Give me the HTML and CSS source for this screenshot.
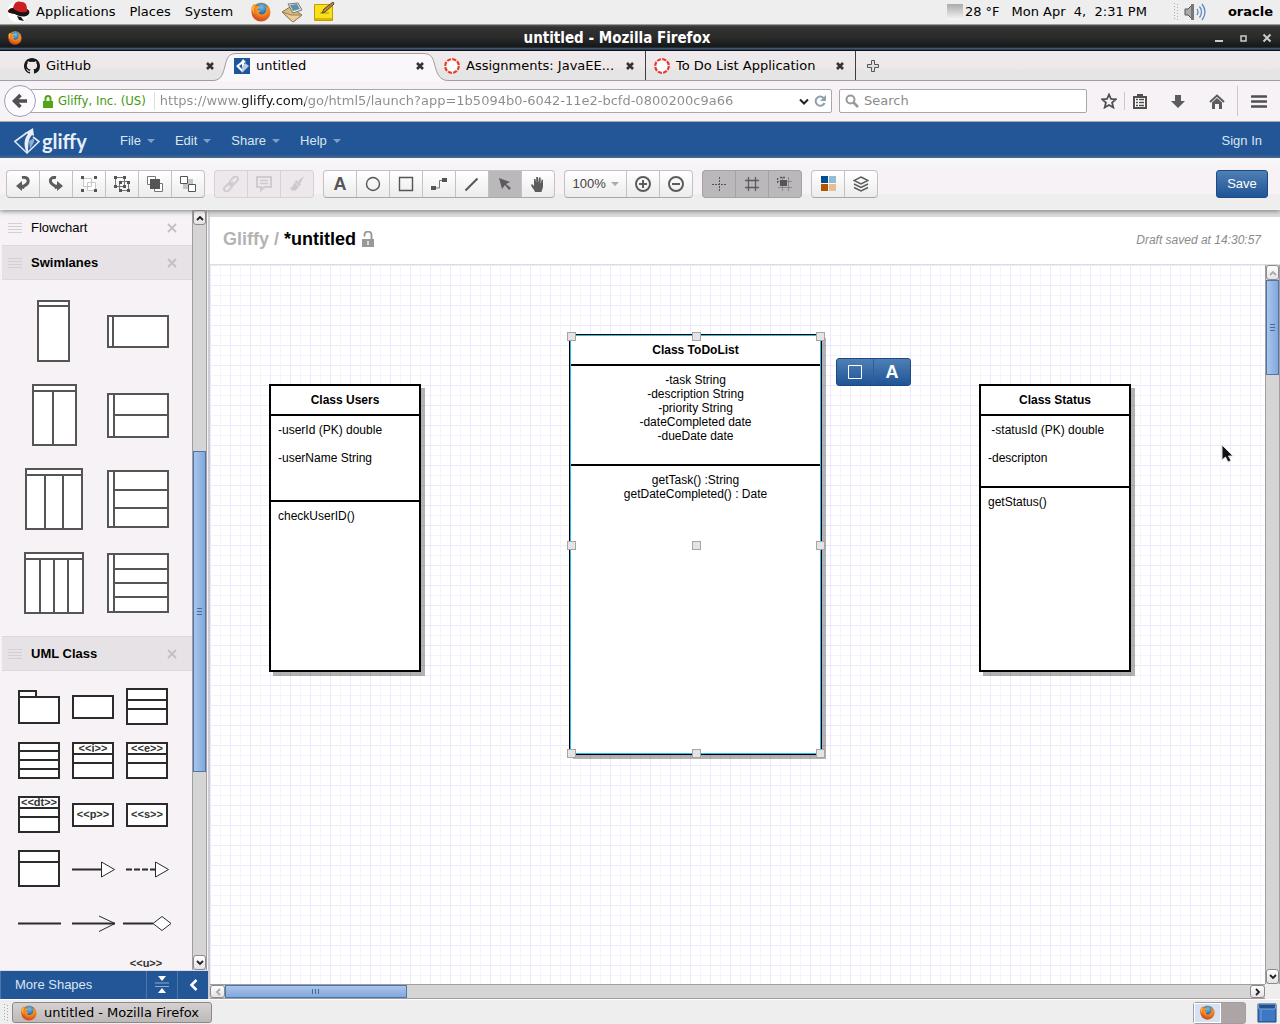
FILE: index.html
```html
<!DOCTYPE html>
<html lang="en">
<head>
<meta charset="utf-8">
<title>untitled - Mozilla Firefox</title>
<link rel="stylesheet" href="styles.css">
</head>
<body>
<svg class="defs" aria-hidden="true">
  <defs>
    <radialGradient id="fox-body" cx=".6" cy=".3" r=".8"><stop offset="0" stop-color="#ffd23c"/><stop offset=".45" stop-color="#f58a1f"/><stop offset="1" stop-color="#c8361a"/></radialGradient>
    <radialGradient id="fox-globe" cx=".5" cy=".3" r=".7"><stop offset="0" stop-color="#6fc0f0"/><stop offset="1" stop-color="#12407f"/></radialGradient>
    <symbol id="firefox" viewBox="0 0 20 20">
      <circle cx="10" cy="10" r="9.5" fill="url(#fox-body)"/>
      <circle cx="10.5" cy="8" r="7" fill="url(#fox-globe)"/>
      <path d="M.8 5 3 2l1.500 2.200c2-.6 3.500 0 4.500 1.300L6.600 7c-.4 1 .2 1.800 2 1.600 1 .1.600 1.300-.8 1.700-.3 1.800 2.500 2.700 4.200 2 2.200-.8 3.600-2.800 3.400-5.300-.1-1.500-.8-2.600-1.600-3.400 2 .6 3.600 2.400 4.200 4.400.8 5-3 10.500-8.200 10.500C3.800 18.500-.6 12 .8 5z" fill="url(#fox-body)"/>
      <path d="M1 5 3 2.500l1 2.300C2.500 7 2.500 10 4 12c-2-1-3.500-4-3-7z" fill="#f9b233"/>
    </symbol>
    <symbol id="close" viewBox="0 0 10 10"><path d="M2 2l6 6M8 2L2 8" stroke="#333" stroke-width="2.600"/></symbol>
    <symbol id="dismiss" viewBox="0 0 10 10"><path d="M1 1l8 8M9 1L1 9" stroke="#c3bfc3" stroke-width="1.800"/></symbol>
    <symbol id="canvas-ring" viewBox="0 0 16 16"><circle cx="8" cy="8" r="6.800" fill="#fff" stroke="#e8392c" stroke-width="2.200" stroke-dasharray="4.140 1.200"/></symbol>
    <symbol id="grip" viewBox="0 0 14 12"><path d="M0 1.500h14M0 4.500h14M0 7.500h14M0 10.500h14" stroke="#d3cfd3"/></symbol>
    <symbol id="dots" viewBox="0 0 6 18"><path d="M1.500 0v18M4.500 1v17" stroke="#aaa" stroke-dasharray="1 2"/></symbol>
    <symbol id="caret" viewBox="0 0 8 4"><path d="M0 0h8L4 4z" fill="currentColor"/></symbol>
    <symbol id="up" viewBox="0 0 8 6"><path d="M1 5l3-3 3 3" fill="none" stroke="currentColor" stroke-width="1.800"/></symbol>
    <symbol id="down" viewBox="0 0 8 6"><path d="M1 1l3 3 3-3" fill="none" stroke="currentColor" stroke-width="1.800"/></symbol>
    <symbol id="left" viewBox="0 0 6 8"><path d="M5 1L2 4l3 3" fill="none" stroke="currentColor" stroke-width="1.800"/></symbol>
    <symbol id="right" viewBox="0 0 6 8"><path d="M1 1l3 3-3 3" fill="none" stroke="currentColor" stroke-width="1.800"/></symbol>
  </defs>
</svg>

<header class="panel">
  <svg width="24" height="24" viewBox="0 0 24 24"><circle cx="11" cy="12" r="10.500" fill="#fff"/><path d="M1 11c2-3 4-3 5-3 1-3 2-6 4-6 2-1 3 0 5 0 4 0 5 4 5 7 2 1 3 3 1 5-3 3-9 2-13 0-4-1-8-1-7-3z" fill="#cb1f24"/><path d="M6 8c2 3 8 5 13 4 1 0 2-1 1-3 3 2 3 4 1 6-4 3-10 1-13-1-3-1-6-1-7-3 1-2 3-3 5-3zM10 16l4 1 3 4-5-1z" fill="#161616"/></svg>
  <button class="panel-menu">Applications</button>
  <button class="panel-menu">Places</button>
  <button class="panel-menu">System</button>
  <svg width="20" height="20"><use href="#firefox"/></svg>
  <svg width="22" height="22" viewBox="0 0 22 22"><path d="M1 11l8-5 12 8-9 7z" fill="#d9b97c" stroke="#8b7348"/><path d="M7 3l10-1 4 7-9 3z" fill="#e9ecea" stroke="#777"/><path d="M9 4l7-1 3 5-7 2z" fill="#5e8fa6"/><path d="M1 11l9 3 11 0-9 7z" fill="#e8cf9c" stroke="#9a8050"/></svg>
  <svg width="22" height="22" viewBox="0 0 22 22"><path d="M1.500 3.500h18v16h-18z" fill="#f6e11c" stroke="#c49b00"/><path d="M2 17h17v2H2z" fill="#d9b400"/><path d="M7 12h9" stroke="#a99000"/><path d="M9 12l2-4 9-7 1 2-9 8z" fill="#b98a4b" stroke="#5b4520"/></svg>
  <span class="grow"></span>
  <span class="weather"><i class="fog"></i>28 °F</span>
  <span class="clock">Mon Apr&nbsp; 4,&nbsp; 2:31 PM</span>
  <svg class="panel-dots" width="6" height="18"><use href="#dots"/></svg>
  <svg width="24" height="20" viewBox="0 0 24 20"><path d="M2 7h3l5-5v16l-5-5H2z" fill="#aaa" stroke="#555"/><path d="M8 2h3v16H8z" fill="#777"/><path d="M14 7q2 3 0 6M16.500 4.500q4 5.500 0 11M19 2q6 8 0 16" fill="none" stroke="#6089c0" stroke-width="1.300"/></svg>
  <strong class="user">oracle</strong>
</header>

<div class="titlebar">
  <svg width="14" height="14"><use href="#firefox"/></svg>
  <h1>untitled - Mozilla Firefox</h1>
  <div class="window-buttons">
    <button aria-label="Minimize"><svg width="10" height="10"><path d="M1 7h8v2H1z" fill="#ccc"/></svg></button>
    <button aria-label="Maximize"><svg width="10" height="10"><path d="M3 3h5v5H3z" fill="none" stroke="#ccc" stroke-width="1.500"/></svg></button>
    <button aria-label="Close"><svg width="10" height="10"><path d="M1.500 1.500l7 7M8.500 1.500l-7 7" stroke="#ccc" stroke-width="2"/></svg></button>
  </div>
</div>

<nav class="tabs" aria-label="Tabs">
  <div class="tab"><svg width="16" height="16" viewBox="0 0 16 16"><path fill="#1a1a1a" d="M8 0C3.580 0 0 3.580 0 8c0 3.540 2.290 6.530 5.470 7.590.4.070.55-.17.55-.38v-1.490c-2.230.48-2.700-1.070-2.700-1.070-.36-.92-.89-1.170-.89-1.170-.73-.5.060-.49.060-.49.800.060 1.230.82 1.230.82.720 1.210 1.870.87 2.330.66.070-.52.280-.87.510-1.070C4.780 11.200 2.910 10.510 2.910 7.450c0-.87.310-1.590.82-2.150-.08-.2-.36-1.020.08-2.120 0 0 .67-.21 2.200.82a7.600 7.600 0 0 1 4 0c1.530-1.040 2.200-.82 2.200-.82.440 1.100.16 1.920.08 2.120.51.560.82 1.270.82 2.150 0 3.070-1.870 3.750-3.650 3.950.29.250.54.730.54 1.480v2.330c0 .21.150.46.550.38A8 8 0 0 0 16 8c0-4.420-3.580-8-8-8z"/></svg><a href="#github">GitHub</a><button aria-label="Close GitHub"><svg width="10" height="10"><use href="#close"/></svg></button></div>
  <div class="tab active">
    <svg class="tab-shape" width="236" height="29" viewBox="0 0 236 29"><path d="M0 28.500C8 28.500 10 22 12 14 14 5 16 1.500 24 1.500H210C218 1.500 220 5 222 14 224 22 227 28.500 235 28.500V29H0z" fill="#f9f7fa"/><path d="M0 28.500C8 28.500 10 22 12 14 14 5 16 1.500 24 1.500H210C218 1.500 220 5 222 14 224 22 227 28.500 235 28.500" fill="none" stroke="#a39da3"/></svg>
    <svg width="16" height="16" viewBox="0 0 16 16"><path fill="#1d559b" d="M0 0h16v16H0z"/><path d="M8 14L2 8l5-4 2-3 3 3-2 1v3z" fill="#fff"/><path d="M11 5l4 3-7 7V9z" fill="#b9cce4"/><path d="M5 8l3-2v5z" fill="#1d559b"/></svg><a href="#untitled" aria-current="page">untitled</a><button aria-label="Close untitled"><svg width="10" height="10"><use href="#close"/></svg></button></div>
  <div class="tab edged"><svg width="16" height="16"><use href="#canvas-ring"/></svg><a href="#assignments">Assignments: JavaEE...</a><button aria-label="Close Assignments"><svg width="10" height="10"><use href="#close"/></svg></button></div>
  <div class="tab edged"><svg width="16" height="16"><use href="#canvas-ring"/></svg><a href="#todo">To Do List Application</a><button aria-label="Close To Do List Application"><svg width="10" height="10"><use href="#close"/></svg></button></div>
  <button class="new-tab" aria-label="New tab"><svg width="14" height="14"><path d="M5.500 1.500h3v4h4v3h-4v4h-3v-4h-4v-3h4z" fill="#e0dee0" stroke="#555"/></svg></button>
</nav>

<div class="navbar">
  <button class="back" aria-label="Back"><svg width="16" height="16"><path d="M15 8H4M8.500 2L2.500 8l6 6" fill="none" stroke="#505050" stroke-width="3.600"/></svg></button>
  <div class="urlbar">
    <svg width="10" height="13"><path d="M0 6h10v7H0z" fill="#55a51c"/><path d="M2.500 7V3.500a2.500 2.500 0 0 1 5 0V7" fill="none" stroke="#55a51c" stroke-width="2"/></svg>
    <span class="identity">Gliffy, Inc. (US)</span>
    <input class="address" type="text" aria-label="Address" value="https://www.gliffy.com/go/html5/launch?app=1b5094b0-6042-11e2-bcfd-0800200c9a66">
    <button aria-label="History"><svg width="10" height="7"><path d="M1 1.500l4 4 4-4" fill="none" stroke="#222" stroke-width="2"/></svg></button>
    <button aria-label="Reload"><svg width="12" height="12"><path d="M10 3.500A4.600 4.600 0 1 0 10.500 8" fill="none" stroke="#8fa0ae" stroke-width="2"/><path d="M12 0v6H6z" fill="#8fa0ae"/></svg></button>
  </div>
  <label class="search">
    <svg width="14" height="14"><circle cx="5.500" cy="5.500" r="4" fill="none" stroke="#999" stroke-width="2"/><path d="M8.500 8.500l4.500 4.500" stroke="#999" stroke-width="2.600"/></svg>
    <input type="text" placeholder="Search" aria-label="Search">
  </label>
  <div class="nav-icons">
    <button aria-label="Bookmark"><svg width="16" height="16"><path d="M8 1.500l2 4.500 4.800.4-3.700 3.200 1.200 4.900L8 12l-4.300 2.500 1.200-4.900L1.200 6.400 6 6z" fill="none" stroke="#505050" stroke-width="1.800"/></svg></button>
    <span class="rule short"></span>
    <button aria-label="Bookmarks list"><svg width="14" height="16"><path d="M1 4h12v11H1z" fill="#fff" stroke="#505050" stroke-width="2"/><path d="M4 1h6v3H4z" fill="#505050"/><path d="M3 6.500h2M6 6.500h5M3 9.500h2M6 9.500h5M3 12.500h2M6 12.500h5" stroke="#505050" stroke-width="1.500"/></svg></button>
    <button class="spaced" aria-label="Downloads"><svg width="14" height="15"><path d="M4 1h6v6h4l-7 7-7-7h4z" fill="#5c5c5c"/></svg></button>
    <button class="spaced" aria-label="Home"><svg width="16" height="15"><path d="M1 8l7-6.500L15 8" fill="none" stroke="#5c5c5c" stroke-width="2"/><path d="M3 8.500L8 4l5 4.500V15h-3v-5H6v5H3z" fill="#5c5c5c"/></svg></button>
    <span class="rule tall"></span>
    <button aria-label="Menu"><svg width="16" height="13"><path d="M1 1.500h14M1 6.500h14M1 11.500h14" stroke="#505050" stroke-width="2.600" stroke-linecap="round"/></svg></button>
  </div>
</div>

<div class="appbar">
  <a class="brand" href="#home"><svg width="26" height="27"><path d="M12.500 5L.8 13.500 13 25l12-11.500-6-4.500" fill="none" stroke="#dfe9f5" stroke-width="1.600"/><path d="M13.500 26C9 18 10 11 14 6l-3-1 8-5 1 8-2-1c-5 5-3 12-4.500 19z" fill="#e6eef8"/><path d="M15 13l5-3v4l-4 7z" fill="#8eabd0"/></svg><span>gliffy</span></a>
  <nav class="menus">
    <button>File<svg width="8" height="4"><use href="#caret"/></svg></button>
    <button>Edit<svg width="8" height="4"><use href="#caret"/></svg></button>
    <button>Share<svg width="8" height="4"><use href="#caret"/></svg></button>
    <button>Help<svg width="8" height="4"><use href="#caret"/></svg></button>
  </nav>
  <a class="signin" href="#signin">Sign In</a>
</div>

<div class="toolbar" role="toolbar">
  <div class="group">
    <button aria-label="Undo"><svg width="16" height="16"><path d="M7 1.500c7-1 9 5.500 1 9" fill="none" stroke="#5b5d5b" stroke-width="3"/><path d="M1 10l6-5v3.500l3 1.500-1 3-2-.5V15z" fill="#5b5d5b"/></svg></button>
    <button aria-label="Redo"><svg width="16" height="16"><path d="M8 1.500c-7-1-8 5.500 0 9" fill="none" stroke="#5b5d5b" stroke-width="3"/><path d="M15 10L9 5v3.500L6 10l1 3 2-.5V15z" fill="#5b5d5b"/></svg></button>
    <button aria-label="Group"><svg width="18" height="18"><path d="M3.500 3.500h8v8h-8zM7.500 7.500h8v8h-8z" fill="#fff" stroke="#c8c8c8"/><path d="M1 1h3v3H1zM14 1h3v3h-3zM1 14h3v3H1zM14 14h3v3h-3z" fill="#555"/></svg></button>
    <button aria-label="Ungroup"><svg width="18" height="18"><path d="M2.500 2.500h9v9h-9zM6.500 6.500h9v9h-9z" fill="none" stroke="#777"/><path d="M1 1h3v3H1zM10 1h3v3h-3zM1 10h3v3H1zM6 6h3v3H6zM14 6h3v3h-3zM6 14h3v3H6zM14 14h3v3h-3zM10 10h3v3h-3z" fill="#555"/></svg></button>
    <button aria-label="Bring to front"><svg width="18" height="18"><path d="M1.500 1.500h8v8h-8zM8.500 8.500h8v8h-8z" fill="#fff" stroke="#777"/><path d="M4 4h10v10H4z" fill="#555"/></svg></button>
    <button aria-label="Send to back"><svg width="18" height="18"><path d="M4 4h10v10H4z" fill="#c4c4c4"/><path d="M1.500 1.500h7v7h-7zM9.500 9.500h7v7h-7z" fill="#fff" stroke="#555"/></svg></button>
  </div>
  <div class="group disabled">
    <button disabled aria-label="Link"><svg width="16" height="16"><g fill="none" stroke="#cfcbcf" stroke-width="2"><rect x="6.500" y="2" width="9" height="5" rx="2.500" transform="rotate(-45 11 4.500)"/><rect x="0.500" y="9" width="9" height="5" rx="2.500" transform="rotate(-45 5 11.500)"/><path d="M6 10l4-4"/></g></svg></button>
    <button disabled aria-label="Comment"><svg width="16" height="16"><path d="M1 1h14v10H8l-3 3v-3H1z" fill="none" stroke="#cfcbcf" stroke-width="2"/><path d="M4 4.500h8M4 7.500h8" stroke="#cfcbcf" stroke-width="1.500"/></svg></button>
    <button disabled aria-label="Format painter"><svg width="16" height="16"><path d="M15 0L9 5l2 3zM7 4l5 5-2 1-4-4zM5 6l5 5-4 4-1-1-2 1-1-2-1-1c3-1 4-3 4-6z" fill="#cbc7cb"/></svg></button>
  </div>
  <div class="group">
    <button class="letter" aria-label="Text">A</button>
    <button aria-label="Ellipse"><svg width="16" height="16"><circle cx="8" cy="8" r="6.500" fill="none" stroke="#555" stroke-width="1.400"/></svg></button>
    <button aria-label="Rectangle"><svg width="16" height="16"><path d="M1.500 1.500h13v13h-13z" fill="none" stroke="#555" stroke-width="1.400"/></svg></button>
    <button aria-label="Connector"><svg width="18" height="14"><path d="M4 11h5.500V3.500H14" fill="none" stroke="#777"/><path d="M1 9h5v4H1zM12 1h5v4h-5z" fill="#555"/></svg></button>
    <button aria-label="Line"><svg width="16" height="16"><path d="M1.500 14.500l12-12" stroke="#555" stroke-width="2"/></svg></button>
    <button class="on" aria-label="Pointer"><svg width="14" height="14"><path d="M1 1l11 4-4 2 5 4-2 2-4-5-3 4z" fill="#5b5d5b"/></svg></button>
    <button aria-label="Hand"><svg width="14" height="16"><path d="M4 16c-1-3-3-4-4-7l1-1 2 2V3l1.500 0 .7 4V1H7l.3 6L8 1.500h1.700V8l1-4.500 1.300.3V10c0 3-1 3-1.500 6z" fill="#5b5d5b"/></svg></button>
  </div>
  <div class="group">
    <label class="zoom"><select aria-label="Zoom"><option>100%</option></select><svg width="8" height="4"><use href="#caret"/></svg></label>
    <button aria-label="Zoom in"><svg width="18" height="18"><circle cx="9" cy="9" r="7" fill="none" stroke="#5b5d5b" stroke-width="2"/><path d="M5 9h8M9 5v8" stroke="#5b5d5b" stroke-width="2"/></svg></button>
    <button aria-label="Zoom out"><svg width="18" height="18"><circle cx="9" cy="9" r="7" fill="none" stroke="#5b5d5b" stroke-width="2"/><path d="M5 9h8" stroke="#5b5d5b" stroke-width="2"/></svg></button>
  </div>
  <div class="group pressed">
    <button aria-label="Guides"><svg width="16" height="16"><path d="M8.500 1v14M1 8.500h14" stroke="#555" stroke-dasharray="2 1"/></svg></button>
    <button aria-label="Grid"><svg width="16" height="16"><path d="M4.500 1v14M11.500 1v14M1 4.500h14M1 11.500h14" stroke="#5b5d5b" stroke-width="1.300"/></svg></button>
    <button aria-label="Snap"><svg width="16" height="16"><path d="M5.500 1v14M11.500 1v14M1 5.500h14M1 11.500h14" stroke="#8b898b"/><path d="M3 4h7v6H3z" fill="#555"/><path d="M.5 2v6M3 1.500h6" stroke="#555" stroke-width="1.500" stroke-dasharray="2 1"/></svg></button>
  </div>
  <div class="group">
    <button aria-label="Colours"><svg width="16" height="16"><path d="M1 0h7v7H1z" fill="#00508f"/><path d="M9 0h7v7H9z" fill="#93bcd6"/><path d="M1 8h7v7H1z" fill="#b35400"/><path d="M9 8h7v7H9z" fill="#e6bd95"/></svg></button>
    <button aria-label="Layers"><svg width="16" height="16"><path d="M8 1l7 3.500L8 8 1 4.500zM1 8l7 3.500L15 8M1 11.500L8 15l7-3.500" fill="none" stroke="#5b5d5b" stroke-width="1.500"/></svg></button>
  </div>
  <span class="grow"></span>
  <button class="save">Save</button>
</div>

<main class="workspace">
  <aside class="sidebar">
    <div class="library">
      <div class="shapes">
        <div class="section"><svg width="14" height="12"><use href="#grip"/></svg><h2>Flowchart</h2><button aria-label="Remove Flowchart"><svg width="10" height="10"><use href="#dismiss"/></svg></button></div>
        <div class="section open"><svg width="14" height="12"><use href="#grip"/></svg><h2>Swimlanes</h2><button aria-label="Remove Swimlanes"><svg width="10" height="10"><use href="#dismiss"/></svg></button></div>
        <div class="swimlanes">
          <svg viewBox="0 0 84 84"><path d="M26 12h31v60H26zM26 17h31"/></svg>
          <svg viewBox="0 0 84 84"><path d="M12 27h60v31H12zM17 27v31"/></svg>
          <svg viewBox="0 0 84 84"><path d="M21 12h43v60H21zM21 18h43M41 18v54"/></svg>
          <svg viewBox="0 0 84 84"><path d="M12 21h60v43H12zM18 21v43M18 42h54"/></svg>
          <svg viewBox="0 0 84 84"><path d="M14 12h56v60H14zM14 18h56M33 18v54M51 18v54"/></svg>
          <svg viewBox="0 0 84 84"><path d="M12 14h60v56H12zM18 14v56M18 33h54M18 51h54"/></svg>
          <svg viewBox="0 0 84 84"><path d="M13 12h58v60H13zM13 18h58M28 18v54M42 18v54M56 18v54"/></svg>
          <svg viewBox="0 0 84 84"><path d="M12 13h60v58H12zM18 13v58M18 28h54M18 42h54M18 56h54"/></svg>
        </div>
        <div class="section open"><svg width="14" height="12"><use href="#grip"/></svg><h2>UML Class</h2><button aria-label="Remove UML Class"><svg width="10" height="10"><use href="#dismiss"/></svg></button></div>
        <div class="uml">
          <svg viewBox="0 0 54 54"><path d="M7 12h17v6h-17zM7 18h40v26H7z"/></svg>
          <svg viewBox="0 0 54 54"><path d="M7 17h40v22H7z"/></svg>
          <svg viewBox="0 0 54 54"><path d="M7 10h40v35H7zM7 21h40M7 30h40"/></svg>
          <svg viewBox="0 0 54 54"><path d="M7 10h40v35H7zM7 18h40M7 27h40M7 36h40"/></svg>
          <svg viewBox="0 0 54 54"><path d="M7 10h40v35H7zM7 21h40M7 30h40"/><text x="27" y="19">&lt;&lt;i&gt;&gt;</text></svg>
          <svg viewBox="0 0 54 54"><path d="M7 10h40v35H7zM7 21h40M7 30h40"/><text x="27" y="19">&lt;&lt;e&gt;&gt;</text></svg>
          <svg viewBox="0 0 54 54"><path d="M7 10h40v35H7zM7 21h40M7 30h40"/><text x="27" y="19">&lt;&lt;dt&gt;&gt;</text></svg>
          <svg viewBox="0 0 54 54"><path d="M7 17h40v22H7z"/><text x="27" y="31">&lt;&lt;p&gt;&gt;</text></svg>
          <svg viewBox="0 0 54 54"><path d="M7 17h40v22H7z"/><text x="27" y="31">&lt;&lt;s&gt;&gt;</text></svg>
          <svg viewBox="0 0 54 54"><path d="M7 10h40v35H7zM7 21h40"/></svg>
          <svg viewBox="0 0 54 54"><path d="M6 28.500h29"/><path class="thin" d="M35.500 21l13 7.500-13 7.500z"/></svg>
          <svg viewBox="0 0 54 54"><path d="M6 28.500h29" stroke-dasharray="6 2"/><path class="thin" d="M35.500 21l13 7.500-13 7.500z"/></svg>
          <svg viewBox="0 0 54 54"><path d="M6 28.500h43"/></svg>
          <svg viewBox="0 0 54 54"><path d="M6 28.500h43"/><path class="thin bare" d="M33 21l16 7.500-16 8"/></svg>
          <svg viewBox="0 0 54 54"><path d="M3 28.500h30"/><path class="thin" d="M33 28.500l9-7 9 7-9 7z"/></svg>
          <svg class="last" viewBox="0 0 54 54"><text x="26" y="18">&lt;&lt;u&gt;&gt;</text></svg>
        </div>
      </div>
      <div class="scroll vertical">
        <button aria-label="Scroll up"><svg width="8" height="6"><use href="#up"/></svg></button>
        <span class="lib-before"></span><span class="thumb lib-thumb"></span><span class="lib-after"></span>
        <button aria-label="Scroll down"><svg width="8" height="6"><use href="#down"/></svg></button>
      </div>
    </div>
    <div class="more">
      <button class="more-shapes">More Shapes</button>
      <button aria-label="Collapse sections"><svg width="14" height="18"><path d="M3 0h8L7 5zM3 17h8L7 12z" fill="#fff"/><path d="M0 7h14M0 10.500h14" stroke="#8faace"/></svg></button>
      <button aria-label="Hide sidebar"><svg width="9" height="12"><path d="M7.500 1L2.500 6l5 5" fill="none" stroke="#fff" stroke-width="2.600"/></svg></button>
    </div>
  </aside>

  <section class="document">
    <div class="doc-head">
      <h2><span>Gliffy / </span>*untitled</h2>
      <svg width="13" height="16"><path d="M0 8h12v8H0z" fill="#999"/><path d="M2.500 5.500V4a3.500 3.500 0 0 1 7 0v4" fill="none" stroke="#999" stroke-width="2"/><path d="M5 10h2v4H5z" fill="#ddd"/></svg>
      <span class="grow"></span>
      <em>Draft saved at 14:30:57</em>
    </div>
    <div class="stage">
      <div class="canvas">
        <article class="uml-class users">
          <h3>Class Users</h3>
          <p class="attributes">-userId (PK) double

-userName String</p>
          <p class="methods">checkUserID()</p>
        </article>
        <article class="uml-class todo">
          <h3>Class ToDoList</h3>
          <p class="attributes">-task String
-description String
-priority String
-dateCompleted date
-dueDate date</p>
          <p class="methods">getTask() :String
getDateCompleted() : Date</p>
          <i class="handle n w"></i><i class="handle n c"></i><i class="handle n e"></i>
          <i class="handle m w"></i><i class="handle m c"></i><i class="handle m e"></i>
          <i class="handle s w"></i><i class="handle s c"></i><i class="handle s e"></i>
        </article>
        <div class="quick">
          <button aria-label="Shape style"><svg width="14" height="14"><path d="M.5.5h13v13H.5z" fill="none" stroke="#fff"/></svg></button>
          <button class="letter" aria-label="Text style">A</button>
        </div>
        <article class="uml-class status">
          <h3>Class Status</h3>
          <p class="attributes"> -statusId (PK) double

-descripton</p>
          <p class="methods">getStatus()</p>
        </article>
        <svg class="pointer" width="14" height="20"><path d="M1 1v15l3.500-3 2.500 5 3-1.500L7.500 12H12z" fill="#111" stroke="#ddd"/></svg>
      </div>
      <div class="scroll vertical">
        <button class="dim" aria-label="Scroll up"><svg width="8" height="6"><use href="#up"/></svg></button>
        <span class="thumb v-thumb"></span><span class="v-after"></span>
        <button aria-label="Scroll down"><svg width="8" height="6"><use href="#down"/></svg></button>
      </div>
      <div class="scroll horizontal">
        <button class="dim" aria-label="Scroll left"><svg width="6" height="8"><use href="#left"/></svg></button>
        <span class="thumb h-thumb"></span><span class="h-after"></span>
        <button aria-label="Scroll right"><svg width="6" height="8"><use href="#right"/></svg></button>
      </div>
    </div>
  </section>
</main>

<footer class="taskbar">
  <svg width="6" height="18"><use href="#dots"/></svg>
  <button class="task"><svg width="16" height="16"><use href="#firefox"/></svg>untitled - Mozilla Firefox</button>
  <span class="grow"></span>
  <div class="pager"><span class="current"><svg width="15" height="15"><use href="#firefox"/></svg></span><span></span></div>
  <svg width="22" height="22"><path d="M2 2h18v18H2z" fill="#3d78c4" stroke="#1d447e"/><path d="M2 2h18l-1 5H3z" fill="#24508c" stroke="#7fa9dc"/><path d="M5 8v11" stroke="#6fa0de"/></svg>
</footer>
</body>
</html>
```
FILE: styles.css
```css
* { box-sizing: border-box; }

body {
  margin: 0;
  height: 100vh;
  display: flex;
  flex-direction: column;
  overflow: hidden;
  background: #eee;
  color: #000;
  font: 13px/16px "Liberation Sans", Arial, sans-serif;
}

button, input, select { font: inherit; color: inherit; margin: 0; padding: 0; border: 0; background: none; }
button { display: flex; align-items: center; justify-content: center; }
a { color: inherit; text-decoration: none; }
h1, h2, h3, p { margin: 0; font: inherit; }
svg { flex: none; display: block; }
.defs { position: absolute; width: 0; height: 0; }
.grow { flex: 1; }

/* Desktop panel */
.panel {
  flex: none;
  height: 25px;
  display: flex;
  align-items: center;
  padding: 0 7px 1px;
  background: #eee;
  border-bottom: 1px solid #9b9b96;
  font: 13px/16px "DejaVu Sans", sans-serif;
}
.panel > svg:first-child { margin-right: 5px; }
.panel-menu { margin-right: 14px; }
.panel-menu + svg { margin-left: 4px; }
.panel-menu ~ svg { margin-right: 10px; }
.weather { display: flex; align-items: center; gap: 2px; margin-right: 12px; }
.fog { width: 16px; height: 16px; background: linear-gradient(#aaa, #f8f8f8); }
.clock { margin-right: 26px; }
.panel .panel-dots { margin-right: 4px; }
.panel .panel-dots + svg { margin-right: 21px; }

/* Window title */
.titlebar {
  flex: none;
  height: 26px;
  display: grid;
  grid-template-columns: 80px 1fr 80px;
  align-items: center;
  padding: 0 8px;
  background: linear-gradient(#555 0, #333 2px, #2b2b2b 12px, #151818 22px, #4d6a94 24px, #111 25px);
  color: #fff;
  font: bold 15px/18px "DejaVu Sans Condensed", "DejaVu Sans", sans-serif;
}
.titlebar h1 { text-align: center; padding-right: 46px; }
.window-buttons { display: flex; justify-content: flex-end; gap: 14px; }

/* Tabs */
.tabs {
  flex: none;
  height: 30px;
  display: flex;
  padding-left: 15px;
  background: linear-gradient(#edeaee, #efe8e8 16px, #e5e5e5 20px);
  border-bottom: 1px solid #a39da3;
  font: 13px/18px "DejaVu Sans", sans-serif;
}
.tab {
  position: relative;
  width: 210px;
  display: flex;
  align-items: center;
  gap: 6px;
  padding: 0 10px 0 9px;
}
.tab > * { position: relative; }
.tab a { flex: 1; white-space: nowrap; }
.tab .tab-shape { position: absolute; left: -12px; top: 1px; }
.active { z-index: 1; height: 30px; padding-bottom: 1px; }
.edged { box-shadow: 1px 0 0 #443c3c; }
.new-tab { width: 36px; }

/* Navigation bar */
.navbar {
  flex: none;
  height: 41px;
  display: flex;
  align-items: center;
  padding: 0 13px 0 4px;
  background: #f6f2f6;
  border-bottom: 1px solid #aaa;
  font: 13px/18px "DejaVu Sans", sans-serif;
}
.back { z-index: 1; width: 32px; height: 32px; border: 1px solid #9aa0b8; border-radius: 50%; background: #fcfafd; }
.urlbar, .search { display: flex; align-items: center; height: 24px; border: 1px solid #aaa6aa; border-radius: 2px; background: #fff; }
.urlbar { flex: 1; margin-left: -8px; padding: 0 5px 0 14px; gap: 5px; }
.identity { color: #419a0c; padding-right: 8px; border-right: 1px solid #ddd; font-family: "DejaVu Sans Condensed", "DejaVu Sans", sans-serif; }
.address {
  flex: 1;
  min-width: 0;
  background: linear-gradient(90deg, #8b8b8b 82px, #111 82px 145px, #8b8b8b 145px);
  -webkit-background-clip: text;
  background-clip: text;
  -webkit-text-fill-color: transparent;
}
.search { width: 248px; margin-left: 7px; padding-left: 5px; gap: 5px; }
.search input { flex: 1; min-width: 0; }
.search input::placeholder { color: #8b8b8b; }
.nav-icons { display: flex; align-items: center; margin-left: 14px; }
.spaced { margin-left: 24px; }
.rule { width: 1px; background: #ccc6ce; }
.short { height: 18px; margin: 0 8px 0 7px; }
.tall { height: 30px; margin: 0 13px 0 12px; }

/* Application header */
.appbar {
  flex: none;
  height: 36px;
  display: flex;
  align-items: center;
  padding: 2px 18px 0 14px;
  background: linear-gradient(#225697 33px, #3f6494);
  color: #dbe5f1;
}
.brand { display: flex; align-items: center; gap: 2px; width: 106px; font: bold 20px/24px Lato, sans-serif; color: #e6eef8; }
.menus { flex: 1; display: flex; gap: 20px; }
.menus button { gap: 6px; }
.menus svg { color: #7f9fc7; }

/* Toolbar */
.toolbar {
  position: relative;
  z-index: 2;
  flex: none;
  height: 52px;
  display: flex;
  gap: 9px;
  padding: 12px 12px 12px 6px;
  border-bottom: 1px solid #f4f4f4;
  background: linear-gradient(#f8f8f8, #f6f2f6 12px 36px, #eee 36px);
  box-shadow: 0 1px 5px #777;
}
.group { display: flex; height: 28px; border: 1px solid #c4c0c4; border-width: 1px 0 1px 1px; border-bottom-color: #aaa6aa; border-radius: 4px; background: linear-gradient(#fff, #ececec); }
.group > * { width: 33px; border-right: 1px solid #c4c0c4; }
.group > :last-child { border-radius: 0 4px 4px 0; }
.group .zoom { width: 62px; display: flex; align-items: center; justify-content: center; gap: 4px; color: #444; }
.zoom select { appearance: none; }
.zoom svg { color: #aaa; }
.disabled { background: #ece8ec; border-color: #d6d2d6; }
.disabled > * { border-color: #d6d2d6; }
.pressed { background: #bbb8bb; border-color: #a5a1a5; }
.pressed > * { border-color: #a5a1a5; }
.on { background: #bbb8bb; }
.letter { font: bold 18px/20px "Liberation Sans", Arial, sans-serif; color: #555; }
.save { width: 52px; height: 28px; border: 1px solid #1d4a85; border-radius: 3px; background: linear-gradient(#4f7fb5, #1f5496); color: #fff; }

/* Workspace */
.workspace { flex: 1; min-height: 0; display: flex; background: #dcdcdc; }
.sidebar { flex: none; width: 210px; display: flex; flex-direction: column; background: #f6f2f6; border-right: 2px solid #cfcdd1; }
.library { flex: 1; min-height: 0; display: flex; padding-right: 1px; border-bottom: 1px solid #ddd; }
.shapes { flex: 1; min-height: 0; overflow: hidden; }
.section { display: flex; align-items: center; height: 35px; margin-left: 2px; padding: 1px 15px 0 6px; }
.section h2 { flex: 1; margin-left: 9px; }
.section.open { padding-top: 0; background: #e6e2e6; border-bottom: 1px solid #dadada; border-top: 1px solid #dadada; font-weight: bold; }
.swimlanes { display: grid; grid-template-columns: 84px 84px; padding: 9px 12px 11px; fill: #fff; stroke: #555; stroke-width: 2px; }
.uml { display: grid; grid-template-columns: 54px 54px 54px; padding: 8px 12px; fill: #fff; stroke: #2b2b2b; stroke-width: 2px; }
.uml text { font: bold 11px "Liberation Sans", sans-serif; text-anchor: middle; fill: #333; stroke: none; }
.uml .last { grid-column: 3; }
.thin { stroke-width: 1px; }
.bare { fill: none; }
.more { flex: none; height: 28px; display: flex; background: #225697; color: #dbe5f1; }
.more button { width: 31px; border-left: 1px solid #4b76ab; }
.more .more-shapes { flex: 1; justify-content: flex-start; padding-left: 14px; }

/* Scroll bars */
.scroll { display: flex; background: #d6d5d6; }
.scroll button { flex: none; border: 1px solid #8d898d; border-radius: 3px; background: linear-gradient(#fff, #e4e2e4); color: #222; }
.scroll .dim { color: #aaa; }
.vertical { flex-direction: column; width: 15px; border: 0 solid #a39d9d; border-width: 0 1px; }
.vertical button { height: 15px; }
.horizontal { height: 15px; border: 0 solid #a39d9d; border-width: 1px 0; }
.horizontal button { width: 15px; }
.thumb { display: grid; place-items: center; border: 1px solid #4c76ab; background: linear-gradient(90deg, #a9c5ec, #82a8dc); }
.thumb::after { content: ""; width: 5px; height: 7px; background: repeating-linear-gradient(#466b9c 0 1px, transparent 1px 3px); }
.lib-before { flex: 227; }
.lib-thumb { flex: 320; }
.lib-after { flex: 184; }
.v-thumb { flex: 93; }
.v-after { flex: 597; }
.h-thumb { flex: 180; background: linear-gradient(#a9c5ec, #82a8dc); }
.h-thumb::after { width: 7px; height: 5px; background: repeating-linear-gradient(90deg, #466b9c 0 1px, transparent 1px 3px); }
.h-after { flex: 845; }

/* Document */
.document { flex: 1; min-width: 0; display: flex; flex-direction: column; padding-top: 7px; }
.doc-head { flex: none; height: 48px; display: flex; align-items: center; gap: 6px; padding: 0 19px 4px 13px; background: #fff; border-bottom: 1px solid #ddd; }
.doc-head h2 { font: bold 18px/22px "Liberation Sans", Arial, sans-serif; }
.doc-head h2 span { color: #b3b3b3; }
.doc-head em { padding-top: 2px; font-size: 12px; color: #8b8b8b; }
.stage { flex: 1; min-height: 0; display: grid; grid-template: 1fr 15px / 1fr 15px; background: #eee; }
.canvas {
  position: relative;
  overflow: hidden;
  background-color: #fff;
  background-image:
    linear-gradient(90deg, #ebe9fd 1px, transparent 1px 10px, #f5f4fe 10px 11px, transparent 11px),
    linear-gradient(#ebe9fd 1px, transparent 1px 10px, #f5f4fe 10px 11px, transparent 11px);
  background-size: 20px 20px;
}
.uml-class { position: absolute; display: flex; flex-direction: column; border: 2px solid #000; background: #fff; box-shadow: 4px 4px 0 rgba(0, 0, 0, .3); font-size: 12px; line-height: 14px; white-space: pre-wrap; }
.uml-class h3 { height: 28px; padding-top: 7px; font-weight: bold; text-align: center; }
.uml-class p { padding: 7px; border-top: 2px solid #000; }
.methods { flex: 1; }
.users { left: 59px; top: 119px; width: 152px; height: 288px; }
.users .attributes { height: 86px; }
.status { left: 769px; top: 119px; width: 152px; height: 288px; }
.status .attributes { height: 72px; }
.todo { left: 359px; top: 69px; width: 253px; height: 421px; border-width: 1px; box-shadow: inset 0 0 0 1px #2cb9ec, 4px 4px 0 rgba(0, 0, 0, .3); padding: 1px; text-align: center; }
.todo .attributes { height: 100px; }
.handle { position: absolute; width: 9px; height: 9px; border: 1px solid #a5a5a5; background: #e4e4e4; }
.handle.n { top: -3px; }
.handle.m { top: 206px; }
.handle.s { bottom: -4px; }
.handle.w { left: -3px; }
.handle.c { left: 122px; }
.handle.e { right: -4px; }
.quick { position: absolute; left: 626px; top: 93px; width: 75px; height: 28px; display: flex; border: 1px solid #1d4a85; border-radius: 3px; background: linear-gradient(#4f7fb5, #1f5496); }
.quick button { flex: 1; }
.quick .letter { color: #fff; border-left: 1px solid #2c5f9f; }
.pointer { position: absolute; left: 1011px; top: 179px; }

/* Desktop task bar */
.taskbar { flex: none; height: 25px; display: flex; align-items: center; gap: 3px; padding: 1px 2px 0 3px; border-top: 1px solid #fff; font: 13px/16px "DejaVu Sans", sans-serif; }
.task { width: 200px; height: 21px; justify-content: flex-start; gap: 7px; padding-left: 8px; border: 1px solid #8d8989; border-radius: 3px; background: linear-gradient(#d5d1d1, #bdb9b9); }
.pager { display: flex; width: 53px; height: 22px; margin-right: 7px; border: 1px solid #a39d9d; border-radius: 3px; background: #ada5a5; }
.pager span { flex: 1; display: grid; place-items: center; }
.pager .current { border: 1px solid #fff; background: #d5e1f4; }
```
